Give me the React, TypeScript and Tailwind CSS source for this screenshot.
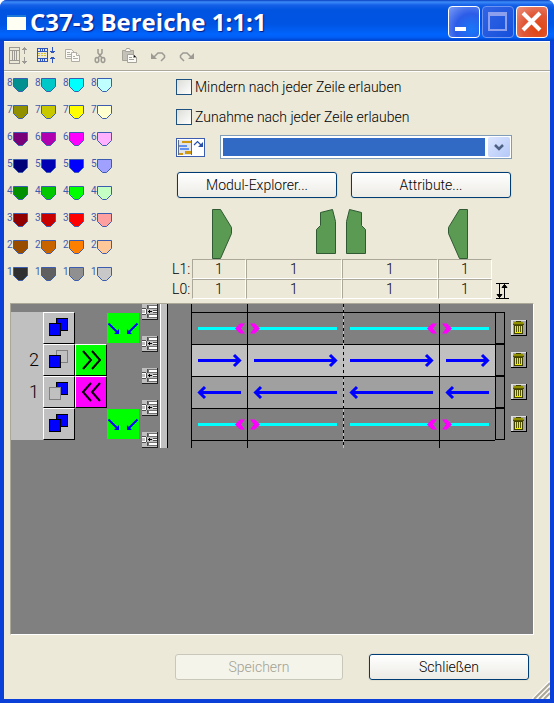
import React from 'react';

const FONT = "font-['Roboto','Liberation_Sans',Arial,sans-serif] font-light";

const palette: { level: number; colors: string[] }[] = [
  { level: 8, colors: ['#009090', '#00c8c8', '#00ffff', '#c0ffff'] },
  { level: 7, colors: ['#909000', '#c8c800', '#ffff00', '#ffffd0'] },
  { level: 6, colors: ['#780078', '#b000b0', '#ff00ff', '#ffb0ff'] },
  { level: 5, colors: ['#000078', '#0000b4', '#0000ff', '#a0a0ff'] },
  { level: 4, colors: ['#009000', '#00c800', '#00ff00', '#c4ffc4'] },
  { level: 3, colors: ['#900000', '#c80000', '#ff0000', '#ffa0a0'] },
  { level: 2, colors: ['#984c00', '#c86400', '#ff8000', '#ffc898'] },
  { level: 1, colors: ['#303030', '#606060', '#909090', '#c8c8c8'] },
];

function Swatch({ color, level }: { color: string; level: number }) {
  return (
    <button type="button" className="flex h-[14px] w-7 items-start gap-px">
      <span className="w-[5px] text-[10px] leading-[9px] font-normal text-[#3c5cb0]">{level}</span>
      <svg width="15" height="14" viewBox="0 0 15 14" aria-hidden="true">
        <path d="M.5.5h14v8l-5 5h-4l-5-5z" fill={color} stroke="#3c5cb0" />
      </svg>
    </button>
  );
}

function ToolIcon({ name }: { name: string }) {
  switch (name) {
    case 'expand':
      return (
        <svg width="20" height="18" viewBox="0 0 20 18" fill="none" stroke="#9c9a92" shapeRendering="crispEdges">
          <path d="M.5.5h10v16H.5zM.5 3.5h10M.5 13.5h10M3.5 3.5v10M5.5 3.5v10M7.5 3.5v10" />
          <path d="M15.500 0v7M15.500 10v7M13 2.500h5M14 1.500h3M13 14.500h5M14 15.500h3" />
        </svg>
      );
    case 'collapse':
      return (
        <svg width="20" height="18" viewBox="0 0 20 18" fill="none" stroke="#2f55c0" shapeRendering="crispEdges">
          <path d="M.5 1.5h10v13H.5zM.5 4.5h10M.5 11.5h10M3.5 1.5v3M5.5 1.5v3M7.5 1.5v3M3.5 11.5v3M5.5 11.5v3M7.5 11.5v3" />
          <path d="M1 6.5h9M1 8.500h9" stroke="#d8c030" strokeDasharray="2 1" />
          <path d="M15.500 0v6M15.500 10v6M13 4.500h5M14 5.500h3M13 11.500h5M14 10.500h3" />
        </svg>
      );
    case 'copy':
      return (
        <svg width="16" height="16" viewBox="0 0 16 16" fill="#fbfaf4" stroke="#b0aea4">
          <path d="M.5 1.500h6l3 3v6h-9z" />
          <path d="M6.500 4.500h5l3 3v6h-8z" />
          <path d="M11.500 4.500v3h3M2 4.500h3M2 6.500h4M2 8.500h4M8 8.500h2M8 10.500h5" />
        </svg>
      );
    case 'cut':
      return (
        <svg width="12" height="16" viewBox="0 0 12 16" fill="none" stroke="#9c9a92" strokeWidth="1.500">
          <path d="M4 1v4l4 5M8 1v4l-4 5" />
          <ellipse cx="3" cy="12" rx="1.800" ry="2.400" />
          <ellipse cx="9" cy="12" rx="1.800" ry="2.400" />
        </svg>
      );
    case 'paste':
      return (
        <svg width="17" height="16" viewBox="0 0 17 16" stroke="#a5a399">
          <path d="M1.500 2.500h11v10h-11z" fill="#c4c2b8" />
          <path d="M4.500 2.500l1-2h3l1 2v1h-5z" fill="#fbfaf4" />
          <path d="M6.500 6.500h6l3 3v5h-9z" fill="#fbfaf4" />
          <path d="M8 9.500h3M8 11.500h5M12.500 6.500v3h3" />
        </svg>
      );
    case 'undo':
      return (
        <svg width="16" height="11" viewBox="0 0 16 11" fill="none" stroke="#9c9a92">
          <path d="M4 6l4-4h4l2.500 2.500v2L11 10" strokeWidth="1.500" />
          <path d="M1 2v6h6z" fill="#9c9a92" stroke="none" />
        </svg>
      );
    default:
      return (
        <svg width="16" height="11" viewBox="0 0 16 11" fill="none" stroke="#9c9a92">
          <path d="M12 6L8 2H4L1.500 4.500v2L5 10" strokeWidth="1.500" />
          <path d="M15 2v6H9z" fill="#9c9a92" stroke="none" />
        </svg>
      );
  }
}

const tools = [
  { name: 'expand', label: 'Aufklappen', width: 'w-[28px]' },
  { name: 'collapse', label: 'Zuklappen', width: 'w-[28px]' },
  { name: 'copy', label: 'Kopieren', width: 'w-[29px]' },
  { name: 'cut', label: 'Ausschneiden', width: 'w-[27px]' },
  { name: 'paste', label: 'Einfügen', width: 'w-[29px]' },
  { name: 'undo', label: 'Rückgängig', width: 'w-[29px]' },
  { name: 'redo', label: 'Wiederholen', width: 'w-[29px]' },
];

function Check({ label }: { label: string }) {
  return (
    <label className="flex h-4 items-center gap-[3px] text-sm leading-4">
      <input
        type="checkbox"
        className="size-4 appearance-none border border-[#1c5180] bg-linear-to-br from-[#dcdcd7] to-white"
      />
      {label}
    </label>
  );
}

function PushButton({ children, className, disabled }: { children: React.ReactNode; className: string; disabled?: boolean }) {
  return (
    <button
      type="button"
      disabled={disabled}
      className={`h-[26px] rounded-[3px] border text-sm leading-4 ${
        disabled
          ? 'border-[#c9c7ba] bg-[#f5f4ea] text-[#a1a192]'
          : 'border-[#003c74] bg-linear-to-b from-white to-[#ecebe5] text-black shadow-[0_0_0_1px_#e2dfd0]'
      } ${className}`}
    >
      {children}
    </button>
  );
}

function BedIcon({ front, back }: { front: boolean; back: boolean }) {
  return (
    <svg width="30" height="30" viewBox="0 0 30 30" shapeRendering="crispEdges" aria-hidden="true">
      <rect x="12.500" y="5.500" width="11" height="12" fill={back ? '#0000ff' : 'none'} stroke={back ? '#000' : '#808080'} />
      <rect x="5.500" y="10.500" width="11" height="12" fill={front ? '#0000ff' : '#c0c0c0'} stroke={front ? '#000' : '#808080'} />
    </svg>
  );
}

const bevel = 'border border-t-white border-l-white border-b-black border-r-black';

function TransferIcon() {
  return (
    <svg width="32" height="30" viewBox="0 0 32 30" aria-hidden="true">
      <path d="M1.500 10.500l9 9M30.500 10.500l-9 9" fill="none" stroke="#0000ff" strokeWidth="2" />
      <path d="M12 16v5H7zM20 16v5h5z" fill="#0000ff" />
    </svg>
  );
}

function LinkIcon() {
  return (
    <svg width="16" height="16" viewBox="0 0 16 16" shapeRendering="crispEdges" aria-hidden="true">
      <path d="M0 0h16v16H0z" fill="#c0c0c0" />
      <path d="M6 1h9v4H6zM6 10h9v4H6z" fill="#707070" />
      <path d="M7 2h8v2H7zM7 11h8v2H7zM11 7h4v1h-4z" fill="#fff" />
      <path d="M11 6h4v1h-4zM11 8h4v1h-4zM5 1h1v4H5zM5 10h1v4H5z" fill="#505050" />
      <path d="M0 4h4v1H0zM0 10h4v1H0zM4 5h1v5H4z" fill="#505050" />
      <path d="M0 5h3v1H0zM0 9h3v1H0zM3 5h1v5H3z" fill="#fff" />
      <path d="M6 7h4v1H6zM7 6h1v3H7z" fill="#000" />
      <path d="M0 15.500h15.500V0" fill="none" stroke="#202020" />
    </svg>
  );
}

function TrashIcon() {
  return (
    <svg width="16" height="16" viewBox="0 0 16 16" shapeRendering="crispEdges" aria-hidden="true">
      <path d="M0 0h16v16H0z" fill="#a0a0a0" />
      <path d="M0 0h15v1H0zM0 0h2v15H0z" fill="#e0e0e0" />
      <path d="M5 1h5v1H5z" fill="#404000" />
      <path d="M3 2h9v1H3zM2 3h11v1H2z" fill="#909000" />
      <path d="M2 4h11v1H2z" fill="#505000" />
      <path d="M3 5h9v9H3z" fill="#404000" />
      <path d="M4 6h7v7H4z" fill="#f0f000" />
      <path d="M5.500 6v6M7.500 6v6M9.500 6v6" stroke="#585800" />
      <path d="M0 15.500h15.500V0" fill="none" stroke="#000" />
    </svg>
  );
}

type RowKind = 'split' | 'right' | 'left';

function Track({ kind, col }: { kind: RowKind; col: number }) {
  const wide = col === 1 || col === 2;
  const w = wide ? 95 : 55;
  const end = wide ? 89 : 49;
  const meetsRight = col === 0 || col === 2;
  return (
    <svg width={w} height="31" viewBox={`0 0 ${w} 31`} fill="none" aria-hidden="true">
      {kind === 'split' && meetsRight && (
        <>
          <path d={`M6 15.500H${w - 9}`} stroke="#00ffff" strokeWidth="3" />
          <path d={`M${w - 12} 15.500l5-5h5l-4 5 4 5h-5z`} fill="#ff00ff" />
        </>
      )}
      {kind === 'split' && !meetsRight && (
        <>
          <path d={`M9 15.500H${end}`} stroke="#00ffff" strokeWidth="3" />
          <path d="M12 15.500l-5-5H2l4 5-4 5h5z" fill="#ff00ff" />
        </>
      )}
      {kind === 'right' && (
        <path d={`M6 15.500H${end - 1}M${end - 7} 10l5.500 5.500-5.500 5.500`} stroke="#0000ff" strokeWidth="3" />
      )}
      {kind === 'left' && (
        <path d={`M7 15.500H${end}M13 10L7.500 15.500 13 21`} stroke="#0000ff" strokeWidth="3" />
      )}
    </svg>
  );
}

const rows: { no: string; kind: RowKind; bg: string; front: boolean; back: boolean }[] = [
  { no: '', kind: 'split', bg: 'bg-[#808080]', front: true, back: true },
  { no: '2', kind: 'right', bg: 'bg-[#c0c0c0]', front: true, back: false },
  { no: '1', kind: 'left', bg: 'bg-[#a0a0a0]', front: false, back: true },
  { no: '', kind: 'split', bg: 'bg-[#808080]', front: true, back: true },
];

const chartCols = 'grid grid-cols-[56px_96px_96px_56px]';
const cellEdge = ['border-l border-black', 'border-l border-black', 'pl-px', 'border-l border-black'];

function TitleBar() {
  return (
    <header className="flex h-[41px] items-center gap-1 bg-[linear-gradient(to_bottom,#0a3fc0_0,#3c8cf8_2px,#1660e8_5px,#0054e0_10px,#0054e3_24px,#0064fc_34px,#0060f8_37px,#0040c8_41px)] pt-[3px] pr-[6px] pl-[7px]">
      <svg width="19" height="15" viewBox="0 0 19 15" aria-hidden="true">
        <path d="M0 0h19v15H0z" fill="#fffff4" />
        <path d="M0 0h19v2H0z" fill="#1c78d8" />
      </svg>
      <h1 className="flex-1 font-['Open_Sans','Noto_Sans',sans-serif] text-2xl leading-8 font-bold whitespace-nowrap text-white [text-shadow:1px_1px_1px_#0a1883]">
        C37-3 Bereiche 1:1:1
      </h1>
      <div className="flex gap-[2px]">
        <button type="button" aria-label="Minimieren" className="size-8 rounded-[4px] border border-white bg-[radial-gradient(circle_at_75%_75%,#1878f8,#2c5ce8_50%,#7c9cf4)]">
          <svg width="30" height="30" viewBox="0 0 30 30"><path d="M6 20h11v4H6z" fill="#fff" /></svg>
        </button>
        <button type="button" disabled aria-label="Maximieren" className="size-8 rounded-[4px] border border-[#6c94f0] bg-linear-to-br from-[#3264e4] to-[#1450dc]">
          <svg width="30" height="30" viewBox="0 0 30 30"><path d="M5 5h19v19H5zM7 9v13h15V9z" fill="#8ca0ee" fillRule="evenodd" /></svg>
        </button>
        <button type="button" aria-label="Fenster schließen" className="size-8 rounded-[4px] border border-white bg-[radial-gradient(circle_at_70%_75%,#e04410,#e05838_50%,#ec9480)]">
          <svg width="30" height="30" viewBox="0 0 30 30" fill="none" stroke="#fff" strokeWidth="4"><path d="M6 6l17 17M23 6L6 23" /></svg>
        </button>
      </div>
    </header>
  );
}

export default function App() {
  return (
    <div className={`flex min-h-screen flex-col overflow-hidden rounded-t-[7px] bg-[#0a3fd8] text-black ${FONT}`}>
      <TitleBar />
      <main className="relative mx-1 mb-1 flex flex-1 flex-col bg-[#ece9d8]">
        <div className="flex h-[30px] items-center border-t border-b border-t-white border-b-[#aca899] pl-[5px]">
          {tools.map((t) => (
            <button key={t.name} type="button" aria-label={t.label} className={`flex h-6 items-center ${t.width}`}>
              <ToolIcon name={t.name} />
            </button>
          ))}
        </div>

        <div className="flex border-t border-white">
          <div className="flex w-[168px] flex-col gap-[13px] pt-[6px] pl-[3px]">
            {palette.map((row) => (
              <div key={row.level} className="flex">
                {row.colors.map((c) => (
                  <Swatch key={c} color={c} level={row.level} />
                ))}
              </div>
            ))}
          </div>

          <div className="flex-1 pt-[7px]">
            <div className="flex flex-col gap-[14px] pl-1">
              <Check label="Mindern nach jeder Zeile erlauben" />
              <Check label="Zunahme nach jeder Zeile erlauben" />
            </div>
            <div className="mt-[10px] flex items-center gap-[15px] pl-1">
              <button type="button" aria-label="Modul wählen" className="border border-[#3c5cb0] bg-white">
                <svg width="27" height="17" viewBox="0 0 27 17" aria-hidden="true">
                  <path d="M1 1h14v15H1z" fill="#e0e4e8" />
                  <path d="M5 2h10v2H5zM8 12h7v3H8zM1 14h5v2H1z" fill="#d09810" />
                  <path d="M2 6h8v2H2zM3 9h9v2H3z" fill="#6090f0" />
                  <path d="M1.500 1v15M14.500 1v15" stroke="#606c80" />
                  <path d="M17 6l3.500-3.500 4 4" fill="none" stroke="#2850a8" strokeWidth="1.200" />
                  <path d="M26 3v5h-5z" fill="#2850a8" />
                </svg>
              </button>
              <div className="relative w-[292px] border border-[#7f9db9] bg-white">
                <select aria-label="Modul" className="block h-[22px] w-full appearance-none bg-[#316ac5] bg-clip-content py-[2px] pr-[26px] pl-[2px] text-sm text-white">
                  <option value=""></option>
                </select>
                <span className="pointer-events-none absolute top-px right-px flex h-5 w-[22px] items-center justify-center rounded-[2px] bg-linear-to-br from-[#dce6fe] to-[#b4c8f8]">
                  <svg width="10" height="7" viewBox="0 0 10 7" fill="none" stroke="#4d6185" strokeWidth="2.500" aria-hidden="true">
                    <path d="M1 1l4 4 4-4" />
                  </svg>
                </span>
              </div>
            </div>
            <div className="mt-[13px] flex gap-[14px] pl-[5px]">
              <PushButton className="w-40">Modul-Explorer...</PushButton>
              <PushButton className="w-40">Attribute...</PushButton>
            </div>

            <svg className="mt-[11px] ml-5 block" width="300" height="50" viewBox="0 0 300 50" fill="#5a9a52" stroke="#2f5a34" aria-hidden="true">
              <path d="M20.500.5h8l11 18v6l-11 25h-8z" />
              <path d="M128.500 3.500l12-3 3 12v32h-19v-24l4-4z" />
              <path d="M169.500 3.500l-12-3-3 12v32h19v-24l-4-4z" />
              <path d="M275.500.5h-8l-11 18v6l11 25h8z" />
            </svg>

            <div className="flex items-end gap-1">
              <table className="w-80 table-fixed border-separate border-spacing-0 text-sm leading-4">
                <colgroup>
                  <col className="w-5" />
                  <col className="w-[54px]" />
                  <col className="w-24" />
                  <col className="w-24" />
                  <col className="w-[54px]" />
                </colgroup>
                <tbody>
                  {['L1:', 'L0:'].map((l) => (
                    <tr key={l} className="h-5">
                      <th scope="row" className="p-0 text-left text-sm leading-4 font-light whitespace-nowrap">{l}</th>
                      {[0, 1, 2, 3].map((i) => (
                        <td key={i} className="border border-t-[#aca899] border-r-white border-b-white border-l-[#aca899] p-0 text-center">1</td>
                      ))}
                    </tr>
                  ))}
                </tbody>
              </table>
              <svg width="13" height="16" viewBox="0 0 13 16" stroke="#000" aria-hidden="true">
                <path d="M0 .5h13M0 15.500h13M3.500 1v14M8.500 1v14" />
                <path d="M1 11.500h5l-2.500 3zM6 4.500h5L8.500 1.500z" />
              </svg>
            </div>
          </div>
        </div>

        <section className="mt-1 mr-4 ml-[6px] flex flex-1 items-start border border-t-[#aca899] border-r-white border-b-white border-l-[#aca899] bg-[#808080]">
          <div className="mt-2 w-8 bg-[#c0c0c0]">
            {rows.map((r, i) => (
              <div key={i} className="flex h-8 items-center justify-end pr-1 text-lg leading-8">{r.no}</div>
            ))}
          </div>
          <div className="mt-2 w-8">
            {rows.map((r, i) => (
              <button key={i} type="button" aria-label="Nadelbett" className={`block size-8 bg-[#c0c0c0] ${bevel}`}>
                <BedIcon front={r.front} back={r.back} />
              </button>
            ))}
          </div>
          <div className="mt-10 w-8">
            <button type="button" aria-label="Nach rechts" className={`block size-8 bg-[#00ff00] ${bevel}`}>
              <svg width="30" height="30" viewBox="0 0 30 30" fill="none" stroke="#000" strokeWidth="2"><path d="M7 6l8 9-8 9M16 6l8 9-8 9" /></svg>
            </button>
            <button type="button" aria-label="Nach links" className={`block size-8 bg-[#ff00ff] ${bevel}`}>
              <svg width="30" height="30" viewBox="0 0 30 30" fill="none" stroke="#000" strokeWidth="2"><path d="M15 6l-8 9 8 9M24 6l-8 9 8 9" /></svg>
            </button>
          </div>
          <div className="mt-2 w-8">
            {rows.map((r, i) => (
              <div key={i} className="h-8 py-px">
                {r.kind === 'split' && (
                  <div className="h-[30px] bg-[#00ff00]"><TransferIcon /></div>
                )}
              </div>
            ))}
          </div>
          <div className="ml-[3px] flex w-4 flex-col gap-4">
            {[0, 1, 2, 3, 4].map((i) => (
              <button key={i} type="button" aria-label="Zeile einfügen" className="block size-4"><LinkIcon /></button>
            ))}
          </div>
          <div className="ml-[2px] h-36 w-2 border-r border-l border-r-black border-l-white bg-[#c0c0c0]" />

          <div className="relative ml-[23px] w-[304px]">
            <div className={chartCols}>
              {cellEdge.map((e, i) => <div key={i} className={`h-2 ${e}`} />)}
            </div>
            {rows.map((r, n) => (
              <div key={n} className={`${chartCols} h-8 border-t border-black ${r.bg}`}>
                {cellEdge.map((e, i) => (
                  <div key={i} className={e}><Track kind={r.kind} col={i} /></div>
                ))}
              </div>
            ))}
            <div className={`${chartCols} h-2 border-t border-black`}>
              {cellEdge.map((e, i) => <div key={i} className={e} />)}
            </div>
            <div className="absolute inset-y-0 left-1/2 w-px bg-[repeating-linear-gradient(to_bottom,#000_0_3px,#c0c0c0_3px_6px)]" />
          </div>
          <div className="mt-2 w-[10px]">
            {rows.map((r, i) => <div key={i} className="h-8 border border-black" />)}
          </div>
          <div className="mt-4 ml-[6px] flex flex-col gap-4">
            {rows.map((r, i) => (
              <button key={i} type="button" aria-label="Zeile löschen" className="block size-4"><TrashIcon /></button>
            ))}
          </div>
        </section>

        <footer className="mt-[19px] mb-[19px] flex justify-end gap-[26px] pr-[21px]">
          <PushButton className="w-[168px]" disabled>Speichern</PushButton>
          <PushButton className="w-40">Schließen</PushButton>
        </footer>
        <svg className="absolute right-0 bottom-0" width="18" height="18" viewBox="0 0 18 18" aria-hidden="true">
          <path d="M0 18L18 0M5 18L18 5M10 18l8-8M15 18l3-3" stroke="#fff" strokeWidth="1.500" />
          <path d="M2 18L18 2M7 18L18 7M12 18l6-6" stroke="#aca899" strokeWidth="2" />
        </svg>
      </main>
    </div>
  );
}
